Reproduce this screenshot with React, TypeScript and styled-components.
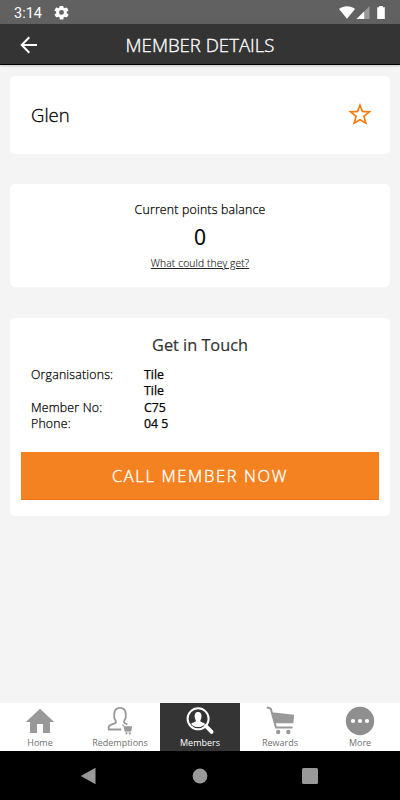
import React from 'react';
import styled, { createGlobalStyle } from 'styled-components';

const GlobalStyle = createGlobalStyle`
  * { box-sizing: border-box; }
  body { margin: 0; background: #f4f4f4; font-family: "Open Sans", "Noto Sans", sans-serif; color: #000; }
`;

const Screen = styled.div`
  width: 400px;
  height: 800px;
  display: flex;
  flex-direction: column;
  overflow: hidden;
`;

const StatusBar = styled.div`
  height: 24px;
  flex: none;
  display: flex;
  align-items: center;
  background: #616161;
  color: #fff;
  padding: 2px 14px 0;
`;

const Clock = styled.span`
  font: 400 14.5px/20px Roboto, sans-serif;
  width: 39.5px;
  padding-top: 1px;
`;

const StatusIcons = styled.div`
  margin-left: auto;
  display: flex;
  align-items: center;
`;

const Header = styled.header`
  height: 42px;
  flex: none;
  display: grid;
  grid-template-columns: 60px 1fr 60px;
  align-items: center;
  background: #343434;
  border-bottom: 1px solid #000;
  box-shadow: 0 1px 2px rgba(0, 0, 0, 0.2);
  height: 41px;
`;

const BackButton = styled.button`
  border: 0;
  background: none;
  padding: 1px 0 0 17px;
  display: flex;
`;

const Title = styled.h1`
  margin: 2px 0 0;
  font-size: 18.6px;
  line-height: 24px;
  font-weight: 300;
  text-align: center;
  color: #fff;
  white-space: nowrap;
  -webkit-text-stroke: 0.35px currentColor;
`;

const Content = styled.main`
  flex: 1;
  padding: 10.5px 10px 0;
`;

const Card = styled.section<{ $height: number; $gap?: number }>`
  height: ${p => p.$height}px;
  margin-bottom: ${p => p.$gap ?? 0}px;
  background: #fff;
  border-radius: 5px;
  display: flex;
  flex-direction: column;
  align-items: center;
`;

const NameRow = styled.div`
  flex: 1;
  width: 100%;
  display: flex;
  align-items: center;
  justify-content: space-between;
  padding: 0 18px 0 21px;
`;

const MemberName = styled.span`
  font-size: 18.5px;
  line-height: 24px;
  font-weight: 300;
  -webkit-text-stroke: 0.3px currentColor;
`;

const BalanceLabel = styled.div`
  margin-top: 17px;
  font-size: 12.3px;
  line-height: 18px;
  font-weight: 300;
  letter-spacing: 0.2px;
  -webkit-text-stroke: 0.25px currentColor;
`;

const Balance = styled.div`
  margin-top: 3px;
  font-size: 21px;
  line-height: 30px;
  -webkit-text-stroke: 0.2px currentColor;
`;

const RewardLink = styled.a`
  margin-top: 4px;
  font-size: 10.3px;
  line-height: 15px;
  font-weight: 300;
  letter-spacing: 0.1px;
  color: #222;
  text-decoration: underline;
  -webkit-text-stroke: 0.15px currentColor;
`;

const CardTitle = styled.h2`
  margin: 15px 0 10px;
  font-size: 16.3px;
  line-height: 24px;
  font-weight: 400;
  color: #333;
  -webkit-text-stroke: 0.2px currentColor;
`;

const Details = styled.dl`
  margin: 0;
  width: 100%;
  padding-left: 21px;
  display: grid;
  grid-template-columns: 113px 1fr;
  font-size: 12.3px;
  line-height: 16.5px;
`;

const Term = styled.dt`
  font-weight: 300;
  letter-spacing: 0.2px;
  -webkit-text-stroke: 0.25px currentColor;
`;

const Value = styled.dd`
  margin: 0;
  -webkit-text-stroke: 0.25px currentColor;
`;

const CallButton = styled.button`
  margin-top: 19px;
  width: 358px;
  height: 48.5px;
  padding: 2px 0 0;
  border: 0;
  border-bottom: 1px solid #f07010;
  background: #f58220;
  color: #fff;
  font: 300 16.4px/24px "Open Sans", sans-serif;
  letter-spacing: 1.7px;
  -webkit-text-stroke: 0.4px currentColor;
`;

const TabBar = styled.nav`
  height: 48px;
  flex: none;
  display: grid;
  grid-template-columns: repeat(5, 80px);
  background: #fff;
`;

const Tab = styled.div<{ $active?: boolean }>`
  display: flex;
  flex-direction: column;
  align-items: center;
  padding-top: 3px;
  background: ${p => (p.$active ? '#343434' : '#fff')};
  color: ${p => (p.$active ? '#fff' : '#999')};
`;

const TabLabel = styled.span<{ $active?: boolean }>`
  margin-top: 1px;
  font-size: 9px;
  line-height: 12px;
  color: ${p => (p.$active ? '#fff' : '#707070')};
`;

const SystemNav = styled.div`
  height: 49px;
  flex: none;
  display: grid;
  grid-template-columns: repeat(3, 110px);
  justify-content: center;
  justify-items: center;
  align-items: center;
  background: #000;
`;

const BackTriangle = styled.svg`
  margin-right: 4px;
`;

const CartShape = () => (
  <>
    <path d="M2.5 1.5 5.7 2.6 11 21.5h15.800" fill="none" stroke="currentColor" strokeWidth="2" strokeLinecap="round" strokeLinejoin="round" />
    <path d="M6.500 6.200 29.200 8.700 28.300 17.300H9.800z" fill="currentColor" />
    <circle cx="13.200" cy="26" r="2.200" fill="currentColor" />
    <circle cx="23.300" cy="26" r="2.200" fill="currentColor" />
  </>
);

const HomeIcon = () => (
  <svg width="30" height="30" viewBox="0 0 30 30">
    <path d="M15 2.700 29.200 16H25v11h-7v-9h-6v9H5V16H.8z" fill="#999" />
  </svg>
);

const RedemptionsIcon = () => (
  <svg width="30" height="30" viewBox="0 0 30 30">
    <path d="M16.300 23.500H3.700v-2.600c0-2.300 6.500-2.800 7.300-4.600.6-1.200-1.500-2.500-1.800-5.300C8.700 5.200 10.400 1.800 15 1.800s6.300 3.400 5.800 9.200c-.3 2.800-2.400 4-1.800 5.300.4 1 1.900 1.500 3.400 2" fill="none" stroke="#999" strokeWidth="1.800" />
    <g transform="translate(17 18.600) scale(.34)" color="#999">
      <path d="M0 1.500h5l5 20h17" fill="none" stroke="currentColor" strokeWidth="2.800" />
      <path d="M5 4.500h25l-2.500 14H9z" fill="currentColor" />
      <circle cx="13" cy="26" r="2.800" fill="currentColor" />
      <circle cx="23.300" cy="26" r="2.800" fill="currentColor" />
    </g>
  </svg>
);

const MembersIcon = () => (
  <svg width="30" height="30" viewBox="-.3 -.4 30 30">
    <circle cx="12.800" cy="12.400" r="10.500" fill="none" stroke="#fff" strokeWidth="2" />
    <path d="M5.800 17.500c.8-1.100 4.500-1.600 4.800-2.800.2-.8-.9-1.600-1.100-3.500C9 7.600 10.100 5.500 12.800 5.500s3.800 2.100 3.300 5.700c-.2 1.900-1.300 2.700-1.100 3.500.3 1.200 4 1.700 4.800 2.800-1.200 2-4.200 3.200-7 3.200s-5.800-1.200-7-3.200z" fill="#fff" />
    <path d="m20.700 19.700 5.600 5.800" stroke="#fff" strokeWidth="3.800" strokeLinecap="round" />
  </svg>
);

const RewardsIcon = () => (
  <svg width="30" height="30" viewBox="0 0 30 30"><CartShape /></svg>
);

const MoreIcon = () => (
  <svg width="30" height="30" viewBox="0 0 30 30">
    <circle cx="15" cy="15" r="14.200" fill="#8f8f8f" />
    <g fill="#fff"><circle cx="8" cy="15" r="2.100" /><circle cx="15" cy="15" r="2.100" /><circle cx="22" cy="15" r="2.100" /></g>
  </svg>
);

const tabs = [
  { label: 'Home', Icon: HomeIcon },
  { label: 'Redemptions', Icon: RedemptionsIcon },
  { label: 'Members', Icon: MembersIcon, active: true },
  { label: 'Rewards', Icon: RewardsIcon },
  { label: 'More', Icon: MoreIcon },
];

const details = [
  ['Organisations:', 'Tile'],
  ['', 'Tile'],
  ['Member No:', 'C75'],
  ['Phone:', '04 5'],
];

export default function App() {
  return (
    <Screen>
      <GlobalStyle />
      <StatusBar>
        <Clock>3:14</Clock>
        <svg width="15" height="15" viewBox="1.5 3 21 21">
          <path fill="#fff" d="M19.400 13a7.500 7.500 0 0 0 0-2l2.100-1.600a.5.5 0 0 0 .1-.7l-2-3.400a.5.5 0 0 0-.6-.2l-2.500 1a7 7 0 0 0-1.700-1l-.4-2.600A.5.5 0 0 0 14 2h-4a.5.5 0 0 0-.5.4l-.4 2.700a7 7 0 0 0-1.700 1l-2.500-1a.5.5 0 0 0-.6.2l-2 3.400a.5.5 0 0 0 .1.700L4.600 11a7.500 7.500 0 0 0 0 2l-2.100 1.600a.5.5 0 0 0-.1.700l2 3.400c.1.2.4.3.6.2l2.500-1a7 7 0 0 0 1.700 1l.4 2.700c0 .2.200.4.500.4h4c.2 0 .5-.2.5-.4l.4-2.700a7 7 0 0 0 1.700-1l2.500 1c.2.1.5 0 .6-.2l2-3.400a.5.5 0 0 0-.1-.7zM12 15.400a3.400 3.400 0 1 1 0-6.800 3.400 3.400 0 0 1 0 6.800z" />
        </svg>
        <StatusIcons>
          <svg width="47" height="15" viewBox="0 .8 47 15">
            <path d="M0 3.700C4.600.1 11.400.1 16 3.700L8 13.600z" fill="#fff" />
            <path d="M30.500 1v12.800h-13z" fill="#999" />
            <path d="M25.200 6.200v7.600h-7.700z" fill="#fff" />
            <path d="M38.200 2h1.900V.8h3.800V2h1.900v11.800h-7.600z" fill="#fff" />
          </svg>
        </StatusIcons>
      </StatusBar>
      <Header>
        <BackButton aria-label="Back">
          <svg width="24" height="24" viewBox="0 0 24 24" fill="none" stroke="#fff" strokeWidth="2">
            <path d="M20 12H5M12.300 4.300 4.700 12l7.600 7.700" />
          </svg>
        </BackButton>
        <Title>MEMBER DETAILS</Title>
      </Header>
      <Content>
        <Card $height={78} $gap={30.5}>
          <NameRow>
            <MemberName>Glen</MemberName>
            <svg width="24" height="24" viewBox="0 1 24 24" fill="none" stroke="#f57c12" strokeWidth="1.700">
              <path d="m12 3.200 2.400 6.200 7 .4-5.500 4.500 1.900 6.800L12 17.800l-5.800 3.300 1.900-6.800-5.500-4.500 7-.4z" />
            </svg>
          </NameRow>
        </Card>
        <Card $height={102.5} $gap={31}>
          <BalanceLabel>Current points balance</BalanceLabel>
          <Balance>0</Balance>
          <RewardLink>What could they get?</RewardLink>
        </Card>
        <Card $height={198.5}>
          <CardTitle>Get in Touch</CardTitle>
          <Details>
            {details.map(([term, value], i) => (
              <React.Fragment key={i}>
                <Term>{term}</Term>
                <Value>{value}</Value>
              </React.Fragment>
            ))}
          </Details>
          <CallButton>CALL MEMBER NOW</CallButton>
        </Card>
      </Content>
      <TabBar>
        {tabs.map(({ label, Icon, active }) => (
          <Tab key={label} $active={active}>
            <Icon />
            <TabLabel $active={active}>{label}</TabLabel>
          </Tab>
        ))}
      </TabBar>
      <SystemNav>
        <BackTriangle width="16" height="18" viewBox="0 0 16 18"><path d="M15.500.7v16.600L.8 9z" fill="#999" /></BackTriangle>
        <svg width="16" height="16" viewBox="0 0 16 16"><circle cx="8" cy="8" r="7.400" fill="#999" /></svg>
        <svg width="16" height="16" viewBox="0 0 16 16"><rect width="16" height="16" rx="1.500" fill="#999" /></svg>
      </SystemNav>
    </Screen>
  );
}
